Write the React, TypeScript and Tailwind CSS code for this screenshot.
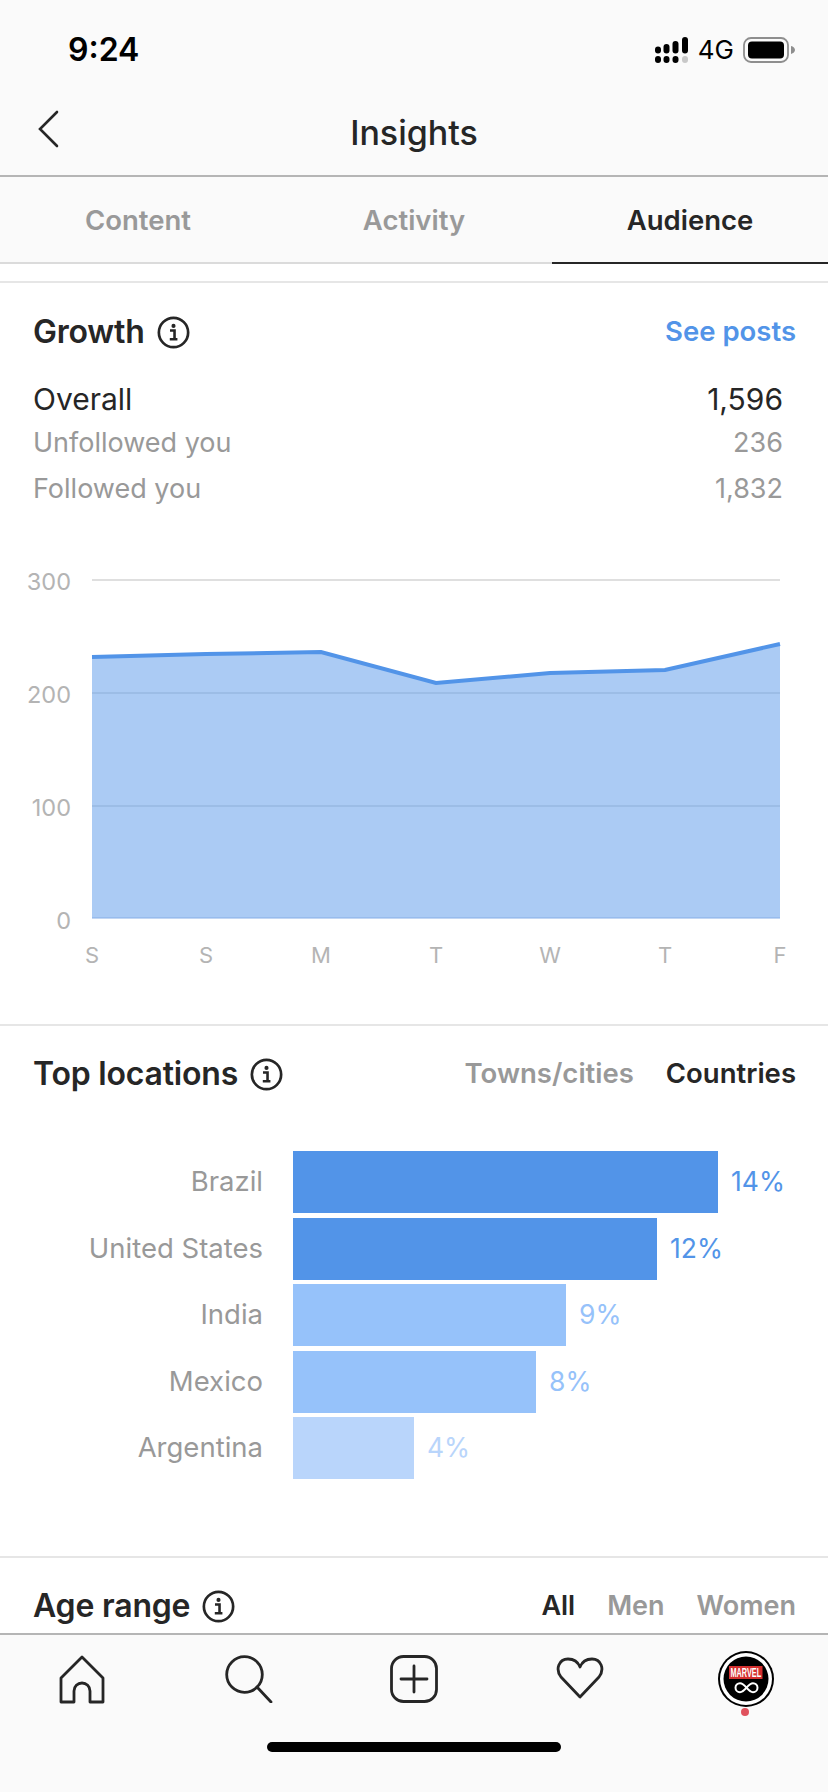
import { ReactNode } from "react";

const locations = [
  { name: "Brazil", pct: "14%", bar: "w-[425px] bg-[#5294e8]", text: "text-[#5294e8]" },
  { name: "United States", pct: "12%", bar: "w-[364px] bg-[#5294e8]", text: "text-[#5294e8]" },
  { name: "India", pct: "9%", bar: "w-[273px] bg-[#96c2fa]", text: "text-[#96c2fa]" },
  { name: "Mexico", pct: "8%", bar: "w-[243px] bg-[#96c2fa]", text: "text-[#96c2fa]" },
  { name: "Argentina", pct: "4%", bar: "w-[121px] bg-[#b9d5fb]", text: "text-[#b9d5fb]" },
];

function InfoIcon() {
  return (
    <svg width="33" height="33" viewBox="0 0 32 32" fill="none" className="shrink-0">
      <circle cx="16" cy="16" r="14.2" stroke="#262626" strokeWidth="2.6" />
      <circle cx="16" cy="9.6" r="2" fill="#262626" />
      <path d="M12.6 14h4.4v8M12.4 22.6h7.4" stroke="#262626" strokeWidth="2.5" />
    </svg>
  );
}

function SectionTitle({ children }: { children: ReactNode }) {
  return (
    <div className="flex items-center gap-[12px]">
      <span className="text-[32px] font-semibold tracking-[-0.2px] text-[#262626]">{children}</span>
      <InfoIcon />
    </div>
  );
}

function StatusBar() {
  return (
    <div className="flex h-[88px] items-start justify-between pl-[68px] pr-[32px] pt-[30px]">
      <span className="text-[32px] leading-[40px] font-semibold text-black">9:24</span>
      <div className="flex items-center gap-[9px] pt-[4px]">
        <svg width="34" height="26" viewBox="0 0 34 26" fill="#000">
          <rect x="0" y="19" width="6" height="7" rx="3" />
          <rect x="8.5" y="19" width="6" height="7" rx="3" />
          <rect x="17.5" y="19" width="6" height="7" rx="3" />
          <rect x="27" y="19" width="6" height="7" rx="3" fill="#c8c8c8" />
          <rect x="0" y="9.5" width="6" height="7" rx="3" />
          <rect x="8.5" y="7" width="6" height="9.5" rx="3" />
          <rect x="17.5" y="4" width="6" height="12.5" rx="3" />
          <rect x="27" y="0" width="6" height="16.5" rx="3" />
        </svg>
        <span className="text-[26px] leading-[32px] font-normal text-black">4G</span>
        <svg width="53" height="26" viewBox="0 0 53 26" fill="none">
          <rect x="1" y="1" width="44" height="24" rx="7" stroke="#8e8e8e" strokeWidth="1.8" />
          <rect x="5" y="4.5" width="36" height="17" rx="4" fill="#000" />
          <path d="M48 9c2.4.6 4 2.2 4 4s-1.600 3.400-4 4z" fill="#8e8e8e" />
        </svg>
      </div>
    </div>
  );
}

function GrowthChart() {
  const line = "92,657 206,654 321,652 436,683 550,673 665,670 780,644";
  const days = ["S", "S", "M", "T", "W", "T", "F"];
  const xs = [92, 206, 321, 436, 550, 665, 780];
  return (
    <svg width="828" height="512" viewBox="0 512 828 512" className="block">
      <line x1="92" x2="780" y1="580" y2="580" stroke="#d4d4d4" strokeWidth="1.6" />
      <polygon points={`${line} 780,918 92,918`} fill="#abcbf4" />
      <line x1="92" x2="780" y1="693" y2="693" stroke="#97b9e2" strokeWidth="1.6" />
      <line x1="92" x2="780" y1="806" y2="806" stroke="#97b9e2" strokeWidth="1.6" />
      <line x1="92" x2="780" y1="918" y2="918" stroke="#85ade6" strokeWidth="1.2" />
      <polyline points={line} fill="none" stroke="#5294e8" strokeWidth="4" />
      <g fontFamily="Inter, sans-serif" fontSize="23.5" fill="#b4b4b4" textAnchor="end">
        <text x="71" y="590">300</text>
        <text x="71" y="703">200</text>
        <text x="71" y="816">100</text>
        <text x="71" y="929">0</text>
      </g>
      <g fontFamily="Inter, sans-serif" fontSize="22" fill="#b4b4b4" textAnchor="middle">
        {days.map((d, i) => (
          <text key={i} x={xs[i]} y="963">
            {d}
          </text>
        ))}
      </g>
    </svg>
  );
}

function BottomTabs() {
  return (
    <div className="h-[159px] shrink-0 border-t-2 border-[#b5b5b5] bg-[#fafafa]">
      <div className="grid h-[56px] grid-cols-5 mt-[16px]">
        <div className="flex items-center justify-center">
          <svg width="46" height="49" viewBox="0 0 46 49" fill="none" stroke="#262626" strokeWidth="2.800" className="mr-[2px]">
            <path d="M23 2 2 23v24h13V36a8 8 0 0 1 16 0v11h13V23z" strokeLinejoin="round" />
          </svg>
        </div>
        <div className="flex items-center justify-center">
          <svg width="48" height="48" viewBox="0 0 48 48" fill="none" stroke="#262626" strokeWidth="2.800" className="ml-[2px]">
            <circle cx="19.500" cy="19.500" r="17.800" />
            <path d="M32 32 46 47" strokeLinecap="round" />
          </svg>
        </div>
        <div className="flex items-center justify-center">
          <svg width="48" height="48" viewBox="0 0 48 48" fill="none" stroke="#262626" strokeWidth="2.800">
            <rect x="1.500" y="1.500" width="45" height="45" rx="12" />
            <path d="M24 11v26M11 24h26" strokeLinecap="round" />
          </svg>
        </div>
        <div className="flex items-center justify-center">
          <svg width="48" height="42" viewBox="0 0 48 42" fill="none" stroke="#262626" strokeWidth="2.800" className="-mt-[2px]">
            <path d="M24 40 5 20C-1 12 3 2 12 2c6 0 10 3 12 8 2-5 6-8 12-8 9 0 13 10 7 18z" strokeLinejoin="round" />
          </svg>
        </div>
        <div className="relative flex items-center justify-center">
          <svg width="56" height="56" viewBox="0 0 56 56" className="ml-[1px]">
            <circle cx="28" cy="28" r="28" fill="#000" />
            <circle cx="28" cy="28" r="26" fill="#fff" />
            <circle cx="28" cy="28" r="22.500" fill="#000" />
            <rect x="11" y="15" width="33.500" height="13" fill="#d32f2f" />
            <text transform="translate(27.800 26.200) scale(0.56 1)" textAnchor="middle" fontFamily="Liberation Sans, sans-serif" fontWeight="700" fontSize="13" fill="#fff">
              MARVEL
            </text>
            <path d="M28.500 36.700c-2.500-3-4.500-4.500-6.500-4.500a4.500 4.500 0 0 0 0 9c2 0 4-1.500 6.500-4.500 2.500-3 4.500-4.500 6.500-4.500a4.500 4.500 0 0 1 0 9c-2 0-4-1.500-6.500-4.500z" fill="none" stroke="#fff" strokeWidth="2" />
          </svg>
          <span className="absolute left-1/2 top-[57px] h-[8px] w-[8px] -translate-x-1/2 rounded-full bg-[#e0525d]" />
        </div>
      </div>
      <div className="mx-auto mt-[35px] h-[10px] w-[294px] rounded-full bg-black" />
    </div>
  );
}

export default function App() {
  return (
    <div className="flex h-[1792px] w-[828px] flex-col overflow-hidden bg-white font-[Inter,sans-serif]">
      <div className="bg-[#fafafa]">
        <StatusBar />
        <div className="relative flex h-[89px] items-center justify-center border-b-2 border-[#b5b5b5]">
          <svg width="22" height="38" viewBox="0 0 22 38" fill="none" stroke="#262626" strokeWidth="2.600" className="absolute left-[37px] top-[22px]">
            <path d="M20 2 3 19l17 17" strokeLinecap="round" />
          </svg>
          <span className="pt-[2px] text-[34px] font-medium text-[#262626]">Insights</span>
        </div>
        <div className="grid h-[87px] grid-cols-3 border-b-2 border-[#dbdbdb] text-[27.5px] font-semibold">
          <div className="flex items-center justify-center pt-[2px] text-[#999]">Content</div>
          <div className="flex items-center justify-center pt-[2px] text-[#999]">Activity</div>
          <div className="-mb-[2px] flex items-center justify-center border-b-2 border-[#262626] pt-[2px] text-[#262626]">Audience</div>
        </div>
      </div>

      <div className="min-h-0 flex-1 overflow-hidden">
        <div className="h-[19px] border-b-2 border-[#e6e6e6]" />

        <section className="border-b-2 border-[#e6e6e6]">
          <div className="mt-[29px] flex h-[40px] items-center justify-between pl-[33px] pr-[32px]">
            <SectionTitle>Growth</SectionTitle>
            <span className="text-[27.5px] font-semibold text-[#5294e8]">See posts</span>
          </div>
          <div className="mt-[27px] pl-[33px] pr-[45px]">
            <div className="flex h-[40px] items-center justify-between text-[30px] text-[#262626]">
              <span>Overall</span>
              <span>1,596</span>
            </div>
            <div className="mt-[1px] flex h-[46px] items-center justify-between text-[27px] text-[#999]">
              <span>Unfollowed you</span>
              <span>236</span>
            </div>
            <div className="flex h-[46px] items-center justify-between text-[27px] text-[#999]">
              <span>Followed you</span>
              <span>1,832</span>
            </div>
          </div>
          <GrowthChart />
        </section>

        <section className="border-b-2 border-[#e6e6e6] pb-[77px]">
          <div className="mt-[28px] flex h-[40px] items-center justify-between pl-[33px] pr-[32px]">
            <SectionTitle>Top locations</SectionTitle>
            <div className="flex gap-[32px] text-[27.5px] font-semibold">
              <span className="text-[#999]">Towns/cities</span>
              <span className="text-[#262626]">Countries</span>
            </div>
          </div>
          <div className="mt-[57px] flex flex-col gap-[4.5px]">
            {locations.map((l) => (
              <div key={l.name} className="flex h-[62px] items-center">
                <span className="w-[263px] text-right text-[27.5px] text-[#999]">{l.name}</span>
                <div className={`ml-[30px] h-full ${l.bar}`} />
                <span className={`ml-[13px] text-[26.5px] ${l.text}`}>{l.pct}</span>
              </div>
            ))}
          </div>
        </section>

        <div className="mt-[28px] flex h-[40px] items-center justify-between pl-[33px] pr-[32px]">
          <SectionTitle>Age range</SectionTitle>
          <div className="flex gap-[32px] text-[27px] font-semibold">
            <span className="text-[#262626]">All</span>
            <span className="text-[#999]">Men</span>
            <span className="text-[#999]">Women</span>
          </div>
        </div>
      </div>

      <BottomTabs />
    </div>
  );
}
